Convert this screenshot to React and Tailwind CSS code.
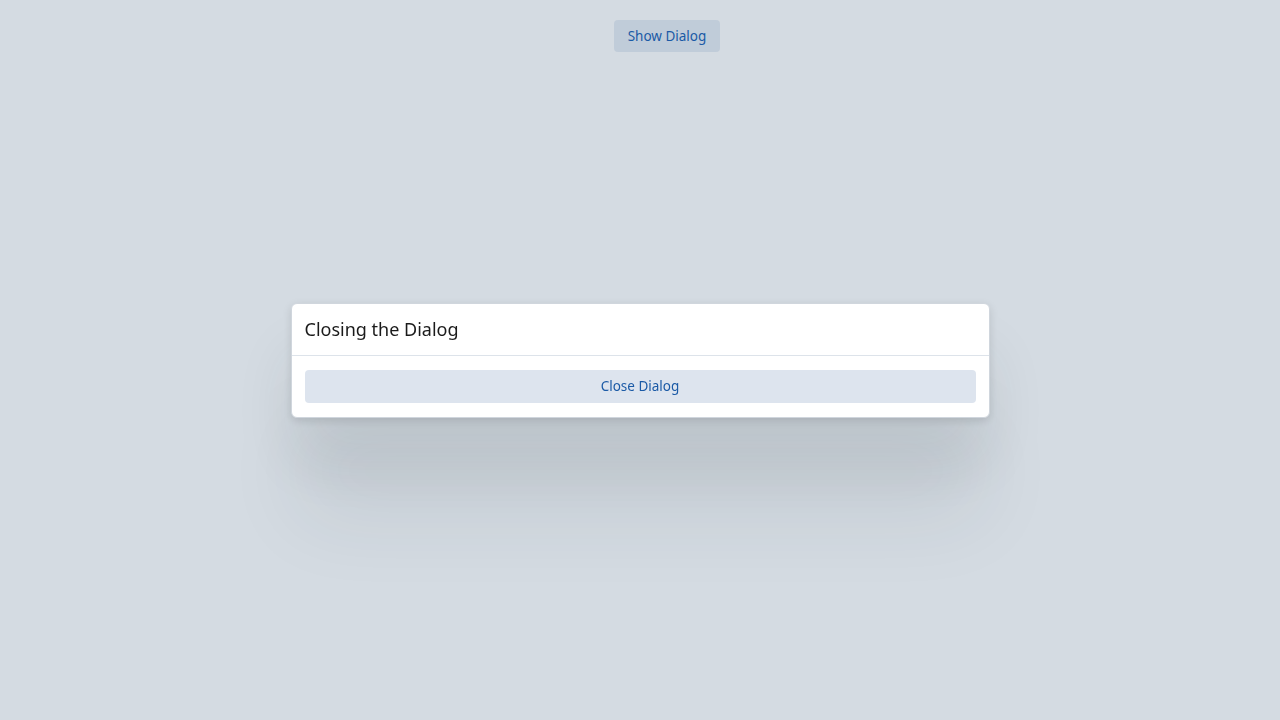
import React, { useState } from 'react'

export default function App() {
  const [open, setOpen] = useState(true)

  return (
    <div className="relative min-h-screen w-full bg-[#d4dbe2] font-['Noto_Sans',sans-serif]">
      <div className="flex justify-center pl-[54px] pt-5">
        <button
          type="button"
          onClick={() => setOpen(true)}
          className="h-8 w-[106px] rounded-[4px] bg-[#c0ccd9] text-[13.5px] text-[#1b5aa6]"
        >
          Show Dialog
        </button>
      </div>

      {open && (
        <div className="fixed inset-0 flex items-center justify-center">
          <div className="w-[699px] overflow-hidden rounded-[6px] border border-[#d0d6dd] bg-white shadow-[0_110px_80px_-10px_rgba(40,50,60,0.08),0_50px_60px_rgba(40,50,60,0.09),0_3px_10px_rgba(0,0,0,0.12)]">
            <div className="flex h-[52px] items-center border-b border-[#dde3ea] px-[13px]">
              <h2 className="text-[18px] text-[#1a1a1a]">Closing the Dialog</h2>
            </div>
            <div className="px-[13px] py-[14px]">
              <button
                type="button"
                onClick={() => setOpen(false)}
                className="h-[33px] w-full rounded-[4px] bg-[#dde4ee] text-[13.5px] text-[#1b5aa6]"
              >
                Close Dialog
              </button>
            </div>
          </div>
        </div>
      )}
    </div>
  )
}
